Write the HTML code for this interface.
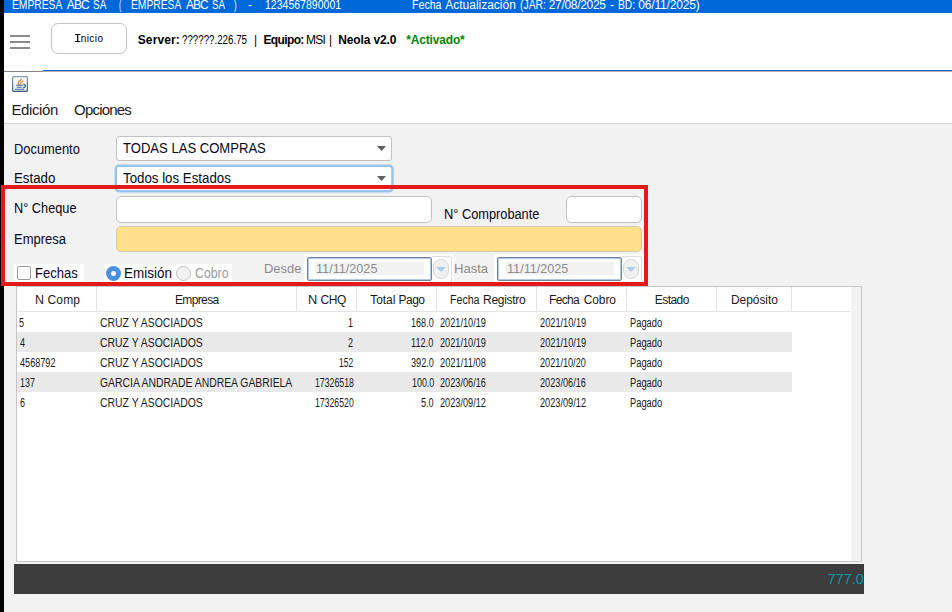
<!DOCTYPE html>
<html><head><meta charset="utf-8"><title>Neola</title>
<style>
html,body{margin:0;padding:0}
body{width:952px;height:612px;position:relative;overflow:hidden;background:#f2f2f2;font-family:"Liberation Sans",sans-serif}
.a{position:absolute;box-sizing:border-box}
.t{position:absolute;white-space:pre;display:block;transform-origin:left top}
</style></head><body>
<!-- white top area -->
<div class="a" style="left:0;top:0;width:952px;height:123px;background:#fff"></div>
<div class="a" style="left:0;top:123px;width:952px;height:1px;background:#d0d0d0"></div>
<!-- title bar -->
<div class="a" style="left:0;top:0;width:952px;height:13px;background:#0068d9"></div>
<!-- hamburger -->
<div class="a" style="left:10px;top:35px;width:20px;height:2px;background:#8c8c8c"></div>
<div class="a" style="left:10px;top:41px;width:20px;height:2px;background:#8c8c8c"></div>
<div class="a" style="left:10px;top:47px;width:20px;height:2px;background:#8c8c8c"></div>
<!-- inicio button -->
<div class="a" style="left:51px;top:23px;width:76px;height:31px;border:1px solid #c4c4c4;border-radius:7px;background:#fff"></div>
<svg class="a" style="left:74px;top:33px" width="8" height="10"><path d="M0.9 0.9h5.5v1h-2.1v6h2.1v1h-5.5v-1h2.1v-6h-2.1z" fill="#15151c"/></svg>
<!-- separator lines -->
<div class="a" style="left:4px;top:71px;width:39px;height:1px;background:#858585"></div>
<div class="a" style="left:43px;top:71px;width:909px;height:1px;background:#b4aea8"></div>
<div class="a" style="left:43px;top:70px;width:909px;height:1px;background:#1565d8"></div>
<!-- java icon -->
<svg class="a" style="left:12px;top:76px" width="16" height="16" viewBox="0 0 16 16">
<defs><linearGradient id="jb" x1="0" y1="0" x2="0" y2="1"><stop offset="0" stop-color="#7fa0c2"/><stop offset="1" stop-color="#3d5b7c"/></linearGradient>
<linearGradient id="jf" x1="0" y1="0" x2="0" y2="1"><stop offset="0" stop-color="#fafafa"/><stop offset="1" stop-color="#e6e8ea"/></linearGradient></defs>
<rect x="0.5" y="0.5" width="15" height="15" rx="1.8" fill="url(#jf)" stroke="url(#jb)" stroke-width="1.3"/>
<path d="M7.3 9C6.5 8.2 5.9 7.2 6.4 6.2C7 5 8.7 4.2 9.6 3" fill="none" stroke="#ea7a1e" stroke-width="1.15" stroke-linecap="round"/>
<path d="M8 8.3C8.1 7.2 9.8 6 10.9 4.9" fill="none" stroke="#ea7a1e" stroke-width="1.05" stroke-linecap="round"/>
<path d="M4 9.3h7.1M5 11.3h4.9M2.9 13.3h9.2" stroke="#40709f" stroke-width="1" fill="none"/>
<path d="M11.3 8.4C13 8.3 14 9.6 13.2 10.6C12.7 11.3 11.9 11.6 11.1 11.7" stroke="#40709f" stroke-width="1.4" fill="none"/>
</svg>
<!-- combos -->
<div class="a" style="left:116px;top:136px;width:276px;height:25px;border:1px solid #c2c2c2;border-radius:3px;background:#fff"></div>
<svg class="a" style="left:377px;top:146px" width="9" height="5"><path d="M0 0h9L4.5 5z" fill="#5e5e5e"/></svg>
<svg class="a" style="left:110px;top:160px" width="290" height="40"><rect x="5.85" y="5.65" width="276.6" height="25.6" rx="3.2" fill="#fff" stroke="#9bc2ea" stroke-width="2.5"/></svg>
<svg class="a" style="left:377px;top:176px" width="9" height="5"><path d="M0 0h9L4.5 5z" fill="#5e5e5e"/></svg>
<!-- inputs -->
<div class="a" style="left:116px;top:196px;width:316px;height:27px;border:1px solid #c2c2c2;border-radius:5px;background:#fff"></div>
<div class="a" style="left:566px;top:196px;width:76px;height:27px;border:1px solid #c2c2c2;border-radius:5px;background:#fff"></div>
<div class="a" style="left:116px;top:226px;width:526px;height:26px;border:1px solid #d2c9a6;border-radius:5px;background:#ffe08b"></div>
<!-- fechas container -->
<div class="a" style="left:14px;top:264px;width:70px;height:19px;background:#fff"></div>
<div class="a" style="left:17px;top:266px;width:14px;height:14px;border:1px solid #9a9a9a;border-radius:2px;background:#fff"></div>
<!-- radio container -->
<div class="a" style="left:104px;top:264px;width:128px;height:19px;background:#fff"></div>
<div class="a" style="left:106px;top:265.5px;width:15px;height:15px;border-radius:50%;background:#4a90e2"></div>
<div class="a" style="left:111px;top:270.5px;width:5px;height:5px;border-radius:50%;background:#fff"></div>
<div class="a" style="left:176px;top:265.5px;width:15px;height:15px;border-radius:50%;background:#f2f2f2;border:1px solid #c2c2c2"></div>
<!-- date 1 -->
<div class="a" style="left:304px;top:254px;width:150px;height:28px;background:#fefefe"></div>
<div class="a" style="left:432px;top:256px;width:20px;height:26px;background:#fff;border-top:1px solid #dcdcdc;border-right:1px solid #dcdcdc;border-top-right-radius:3px"></div>
<div class="a" style="left:307px;top:257px;width:125px;height:24px;border:1px solid #71869c;border-radius:2px;background:#fff;box-shadow:inset 0 0 0 1px #b0c8e4"></div>
<div class="a" style="left:315px;top:262px;width:109px;height:13px;background:#f2f2f2"></div>
<div class="a" style="left:433px;top:259px;width:16px;height:20px;border:1px solid #d6d6d6;border-radius:8px;background:#f1f1f1"></div>
<svg class="a" style="left:436px;top:267px" width="10" height="5"><path d="M0 0h10L5 5z" fill="#aecbea"/></svg>
<!-- date 2 -->
<div class="a" style="left:494px;top:254px;width:150px;height:28px;background:#fefefe"></div>
<div class="a" style="left:622px;top:256px;width:20px;height:26px;background:#fff;border-top:1px solid #dcdcdc;border-right:1px solid #dcdcdc;border-top-right-radius:3px"></div>
<div class="a" style="left:497px;top:257px;width:125px;height:24px;border:1px solid #71869c;border-radius:2px;background:#fff;box-shadow:inset 0 0 0 1px #b0c8e4"></div>
<div class="a" style="left:505px;top:262px;width:109px;height:13px;background:#f2f2f2"></div>
<div class="a" style="left:623px;top:259px;width:16px;height:20px;border:1px solid #d6d6d6;border-radius:8px;background:#f1f1f1"></div>
<svg class="a" style="left:626px;top:267px" width="10" height="5"><path d="M0 0h10L5 5z" fill="#aecbea"/></svg>
<!-- table -->
<div class="a" style="left:16px;top:286px;width:846px;height:276px;border:1px solid #c6c6c6;background:#fff"></div>
<div class="a" style="left:851px;top:287px;width:10px;height:274px;background:#f2f2f2"></div>
<div class="a" style="left:17px;top:311px;width:834px;height:1px;background:#e4e4e4"></div>
<div class="a" style="left:96px;top:287px;width:1px;height:24px;background:#e2e2e2"></div>
<div class="a" style="left:296px;top:287px;width:1px;height:24px;background:#e2e2e2"></div>
<div class="a" style="left:356px;top:287px;width:1px;height:24px;background:#e2e2e2"></div>
<div class="a" style="left:436px;top:287px;width:1px;height:24px;background:#e2e2e2"></div>
<div class="a" style="left:536px;top:287px;width:1px;height:24px;background:#e2e2e2"></div>
<div class="a" style="left:626px;top:287px;width:1px;height:24px;background:#e2e2e2"></div>
<div class="a" style="left:716px;top:287px;width:1px;height:24px;background:#e2e2e2"></div>
<div class="a" style="left:791px;top:287px;width:1px;height:24px;background:#e2e2e2"></div>
<div class="a" style="left:17px;top:332px;width:775px;height:20px;background:#e9e9e9"></div>
<div class="a" style="left:17px;top:372px;width:775px;height:20px;background:#e9e9e9"></div>
<!-- dark bar -->
<div class="a" style="left:14px;top:564px;width:850px;height:30px;background:#3c3c3c"></div>
<span class="t" style="left:12px;top:-1px;font-size:12px;line-height:12px;color:#ffffff;transform:scaleX(0.8565)">EMPRESA</span>
<span class="t" style="left:66.75px;top:-1px;font-size:12px;line-height:12px;color:#ffffff;letter-spacing:-0.836px">ABC</span>
<span class="t" style="left:93px;top:-1px;font-size:12px;line-height:12px;color:#ffffff;transform:scaleX(0.8354)">SA</span>
<span class="t" style="left:119px;top:-1px;font-size:12px;line-height:12px;color:#ffffff;transform:scaleX(0.5680)">(</span>
<span class="t" style="left:131px;top:-1px;font-size:12px;line-height:12px;color:#ffffff;transform:scaleX(0.8565)">EMPRESA</span>
<span class="t" style="left:186px;top:-1px;font-size:12px;line-height:12px;color:#ffffff;letter-spacing:-1.049px">ABC</span>
<span class="t" style="left:212px;top:-1px;font-size:12px;line-height:12px;color:#ffffff;transform:scaleX(0.8117)">SA</span>
<span class="t" style="left:234px;top:-1px;font-size:12px;line-height:12px;color:#ffffff;transform:scaleX(0.6477)">)</span>
<span class="t" style="left:248px;top:-1px;font-size:12px;line-height:12px;color:#ffffff;transform:scaleX(1.0291)">-</span>
<span class="t" style="left:265px;top:-1px;font-size:12px;line-height:12px;color:#ffffff;transform:scaleX(0.8771)">1234567890001</span>
<span class="t" style="left:412px;top:-1px;font-size:12px;line-height:12px;color:#ffffff;transform:scaleX(0.8852)">Fecha</span>
<span class="t" style="left:445.25px;top:-1px;font-size:12px;line-height:12px;color:#ffffff;letter-spacing:-0.010px">Actualización</span>
<span class="t" style="left:520px;top:-1px;font-size:12px;line-height:12px;color:#ffffff;transform:scaleX(0.8634)">(JAR:</span>
<span class="t" style="left:548.75px;top:-1px;font-size:12px;line-height:12px;color:#ffffff;letter-spacing:-0.310px">27/08/2025</span>
<span class="t" style="left:610px;top:-1px;font-size:12px;line-height:12px;color:#ffffff;transform:scaleX(1.0291)">-</span>
<span class="t" style="left:618px;top:-1px;font-size:12px;line-height:12px;color:#ffffff;transform:scaleX(0.8552)">BD:</span>
<span class="t" style="left:638.25px;top:-1px;font-size:12px;line-height:12px;color:#ffffff;letter-spacing:-0.178px">06/11/2025)</span>
<span class="t" style="left:80.75px;top:34px;font-size:10px;line-height:10px;color:#000;letter-spacing:0.409px">nicio</span>
<span class="t" style="left:137.75px;top:34px;font-size:12px;line-height:12px;font-weight:bold;color:#000;letter-spacing:0.111px">Server:</span>
<span class="t" style="left:182px;top:34px;font-size:12px;line-height:12px;color:#000;transform:scaleX(0.8116)">??????.226.75</span>
<span class="t" style="left:254px;top:34px;font-size:12px;line-height:12px;color:#000;">|</span>
<span class="t" style="left:263.5px;top:34px;font-size:12px;line-height:12px;font-weight:bold;color:#000;letter-spacing:-0.637px">Equipo:</span>
<span class="t" style="left:306px;top:34px;font-size:12px;line-height:12px;color:#000;letter-spacing:-0.771px">MSI</span>
<span class="t" style="left:329px;top:34px;font-size:12px;line-height:12px;color:#000;">|</span>
<span class="t" style="left:338.25px;top:34px;font-size:12px;line-height:12px;font-weight:bold;color:#000;letter-spacing:-0.129px">Neola v2.0</span>
<span class="t" style="left:406.25px;top:34px;font-size:12px;line-height:12px;font-weight:bold;color:#068406;letter-spacing:-0.170px">*Activado*</span>
<span class="t" style="left:11.5px;top:102px;font-size:15px;line-height:15px;color:#1c1c1c;letter-spacing:-0.413px">Edición</span>
<span class="t" style="left:74px;top:102px;font-size:15px;line-height:15px;color:#1c1c1c;letter-spacing:-0.792px">Opciones</span>
<span class="t" style="left:14px;top:142px;font-size:14px;line-height:14px;color:#08081a;transform:scaleX(0.9196)">Documento</span>
<span class="t" style="left:14px;top:171px;font-size:14px;line-height:14px;color:#08081a;transform:scaleX(0.9486)">Estado</span>
<span class="t" style="left:14px;top:201px;font-size:14px;line-height:14px;color:#08081a;transform:scaleX(0.9110)">N° Cheque</span>
<span class="t" style="left:14px;top:232px;font-size:14px;line-height:14px;color:#08081a;transform:scaleX(0.9283)">Empresa</span>
<span class="t" style="left:444px;top:207px;font-size:14px;line-height:14px;color:#08081a;transform:scaleX(0.9135)">N° Comprobante</span>
<span class="t" style="left:123px;top:141px;font-size:14px;line-height:14px;color:#08081a;transform:scaleX(0.9336)">TODAS LAS COMPRAS</span>
<span class="t" style="left:123px;top:171px;font-size:14px;line-height:14px;color:#08081a;transform:scaleX(0.9489)">Todos los Estados</span>
<span class="t" style="left:35px;top:266px;font-size:14px;line-height:14px;color:#08081a;transform:scaleX(0.9321)">Fechas</span>
<span class="t" style="left:124px;top:266px;font-size:14px;line-height:14px;color:#08081a;transform:scaleX(0.9614)">Emisión</span>
<span class="t" style="left:195px;top:266px;font-size:14px;line-height:14px;color:#9a9a9a;transform:scaleX(0.8804)">Cobro</span>
<span class="t" style="left:264px;top:262px;font-size:13px;line-height:13px;color:#8c8c8c;transform:scaleX(0.9962)">Desde</span>
<span class="t" style="left:454px;top:262px;font-size:13px;line-height:13px;color:#8c8c8c;transform:scaleX(1.0047)">Hasta</span>
<span class="t" style="left:316px;top:262px;font-size:13px;line-height:13px;color:#8c8c8c;transform:scaleX(0.9730)">11/11/2025</span>
<span class="t" style="left:507px;top:262px;font-size:13px;line-height:13px;color:#8c8c8c;transform:scaleX(0.9726)">11/11/2025</span>
<span class="t" style="left:35px;top:294px;font-size:12px;line-height:12px;color:#1a1a1a;transform:scaleX(1.0428)">N</span>
<span class="t" style="left:47.5px;top:294px;font-size:12px;line-height:12px;color:#1a1a1a;letter-spacing:0.168px">Comp</span>
<span class="t" style="left:175px;top:294px;font-size:12px;line-height:12px;color:#1a1a1a;letter-spacing:-0.640px">Empresa</span>
<span class="t" style="left:308px;top:294px;font-size:12px;line-height:12px;color:#1a1a1a;transform:scaleX(1.0708)">N</span>
<span class="t" style="left:320.5px;top:294px;font-size:12px;line-height:12px;color:#1a1a1a;letter-spacing:-0.365px">CHQ</span>
<span class="t" style="left:370.25px;top:294px;font-size:12px;line-height:12px;color:#1a1a1a;letter-spacing:-0.058px">Total</span>
<span class="t" style="left:398.5px;top:294px;font-size:12px;line-height:12px;color:#1a1a1a;letter-spacing:-0.495px">Pago</span>
<span class="t" style="left:450px;top:294px;font-size:12px;line-height:12px;color:#1a1a1a;transform:scaleX(0.8852)">Fecha</span>
<span class="t" style="left:483px;top:294px;font-size:12px;line-height:12px;color:#1a1a1a;letter-spacing:-0.283px">Registro</span>
<span class="t" style="left:549px;top:294px;font-size:12px;line-height:12px;color:#1a1a1a;letter-spacing:-0.673px">Fecha</span>
<span class="t" style="left:583.75px;top:294px;font-size:12px;line-height:12px;color:#1a1a1a;letter-spacing:-0.129px">Cobro</span>
<span class="t" style="left:654.75px;top:294px;font-size:12px;line-height:12px;color:#1a1a1a;letter-spacing:-0.540px">Estado</span>
<span class="t" style="left:731px;top:294px;font-size:12px;line-height:12px;color:#1a1a1a;letter-spacing:-0.077px">Depósito</span>
<span class="t" style="left:19px;top:317px;font-size:12px;line-height:12px;color:#1a1a1a;transform:scaleX(0.7500)">5</span>
<span class="t" style="left:100px;top:317px;font-size:12px;line-height:12px;color:#1a1a1a;transform:scaleX(0.8693)">CRUZ Y ASOCIADOS</span>
<span class="t" style="left:348px;top:317px;font-size:12px;line-height:12px;color:#1a1a1a;transform:scaleX(0.7500)">1</span>
<span class="t" style="left:411px;top:317px;font-size:12px;line-height:12px;color:#1a1a1a;transform:scaleX(0.7583)">168.0</span>
<span class="t" style="left:440px;top:317px;font-size:12px;line-height:12px;color:#1a1a1a;transform:scaleX(0.7650)">2021/10/19</span>
<span class="t" style="left:540px;top:317px;font-size:12px;line-height:12px;color:#1a1a1a;transform:scaleX(0.7682)">2021/10/19</span>
<span class="t" style="left:630px;top:317px;font-size:12px;line-height:12px;color:#1a1a1a;transform:scaleX(0.7769)">Pagado</span>
<span class="t" style="left:20px;top:337px;font-size:12px;line-height:12px;color:#1a1a1a;transform:scaleX(0.7500)">4</span>
<span class="t" style="left:100px;top:337px;font-size:12px;line-height:12px;color:#1a1a1a;transform:scaleX(0.8693)">CRUZ Y ASOCIADOS</span>
<span class="t" style="left:348px;top:337px;font-size:12px;line-height:12px;color:#1a1a1a;transform:scaleX(0.7500)">2</span>
<span class="t" style="left:411px;top:337px;font-size:12px;line-height:12px;color:#1a1a1a;transform:scaleX(0.7631)">112.0</span>
<span class="t" style="left:440px;top:337px;font-size:12px;line-height:12px;color:#1a1a1a;transform:scaleX(0.7650)">2021/10/19</span>
<span class="t" style="left:540px;top:337px;font-size:12px;line-height:12px;color:#1a1a1a;transform:scaleX(0.7682)">2021/10/19</span>
<span class="t" style="left:630px;top:337px;font-size:12px;line-height:12px;color:#1a1a1a;transform:scaleX(0.7769)">Pagado</span>
<span class="t" style="left:20px;top:357px;font-size:12px;line-height:12px;color:#1a1a1a;transform:scaleX(0.7586)">4568792</span>
<span class="t" style="left:100px;top:357px;font-size:12px;line-height:12px;color:#1a1a1a;transform:scaleX(0.8693)">CRUZ Y ASOCIADOS</span>
<span class="t" style="left:339px;top:357px;font-size:12px;line-height:12px;color:#1a1a1a;transform:scaleX(0.7047)">152</span>
<span class="t" style="left:411px;top:357px;font-size:12px;line-height:12px;color:#1a1a1a;transform:scaleX(0.7617)">392.0</span>
<span class="t" style="left:440px;top:357px;font-size:12px;line-height:12px;color:#1a1a1a;transform:scaleX(0.7757)">2021/11/08</span>
<span class="t" style="left:540px;top:357px;font-size:12px;line-height:12px;color:#1a1a1a;transform:scaleX(0.7636)">2021/10/20</span>
<span class="t" style="left:630px;top:357px;font-size:12px;line-height:12px;color:#1a1a1a;transform:scaleX(0.7769)">Pagado</span>
<span class="t" style="left:20px;top:377px;font-size:12px;line-height:12px;color:#1a1a1a;transform:scaleX(0.7446)">137</span>
<span class="t" style="left:100px;top:377px;font-size:12px;line-height:12px;color:#1a1a1a;transform:scaleX(0.8659)">GARCIA ANDRADE ANDREA GABRIELA</span>
<span class="t" style="left:315px;top:377px;font-size:12px;line-height:12px;color:#1a1a1a;transform:scaleX(0.7287)">17326518</span>
<span class="t" style="left:412px;top:377px;font-size:12px;line-height:12px;color:#1a1a1a;transform:scaleX(0.7413)">100.0</span>
<span class="t" style="left:440px;top:377px;font-size:12px;line-height:12px;color:#1a1a1a;transform:scaleX(0.7644)">2023/06/16</span>
<span class="t" style="left:540px;top:377px;font-size:12px;line-height:12px;color:#1a1a1a;transform:scaleX(0.7637)">2023/06/16</span>
<span class="t" style="left:630px;top:377px;font-size:12px;line-height:12px;color:#1a1a1a;transform:scaleX(0.7769)">Pagado</span>
<span class="t" style="left:20px;top:397px;font-size:12px;line-height:12px;color:#1a1a1a;transform:scaleX(0.7500)">6</span>
<span class="t" style="left:100px;top:397px;font-size:12px;line-height:12px;color:#1a1a1a;transform:scaleX(0.8693)">CRUZ Y ASOCIADOS</span>
<span class="t" style="left:315px;top:397px;font-size:12px;line-height:12px;color:#1a1a1a;transform:scaleX(0.7255)">17326520</span>
<span class="t" style="left:421px;top:397px;font-size:12px;line-height:12px;color:#1a1a1a;transform:scaleX(0.7602)">5.0</span>
<span class="t" style="left:440px;top:397px;font-size:12px;line-height:12px;color:#1a1a1a;transform:scaleX(0.7648)">2023/09/12</span>
<span class="t" style="left:540px;top:397px;font-size:12px;line-height:12px;color:#1a1a1a;transform:scaleX(0.7661)">2023/09/12</span>
<span class="t" style="left:630px;top:397px;font-size:12px;line-height:12px;color:#1a1a1a;transform:scaleX(0.7769)">Pagado</span>
<span class="t" style="left:827.75px;top:572px;font-size:14px;line-height:14px;color:#0a9aa0;letter-spacing:0.192px">777.0</span>
<!-- red highlight -->
<div class="a" style="left:1px;top:185px;width:647px;height:101px;border:4px solid #e41a1a"></div>
<!-- black strip -->
<div class="a" style="left:0;top:0;width:4px;height:185px;background:#000"></div>
<div class="a" style="left:0;top:185px;width:1px;height:101px;background:#000"></div>
<div class="a" style="left:0;top:286px;width:4px;height:326px;background:#000"></div>
</body></html>
